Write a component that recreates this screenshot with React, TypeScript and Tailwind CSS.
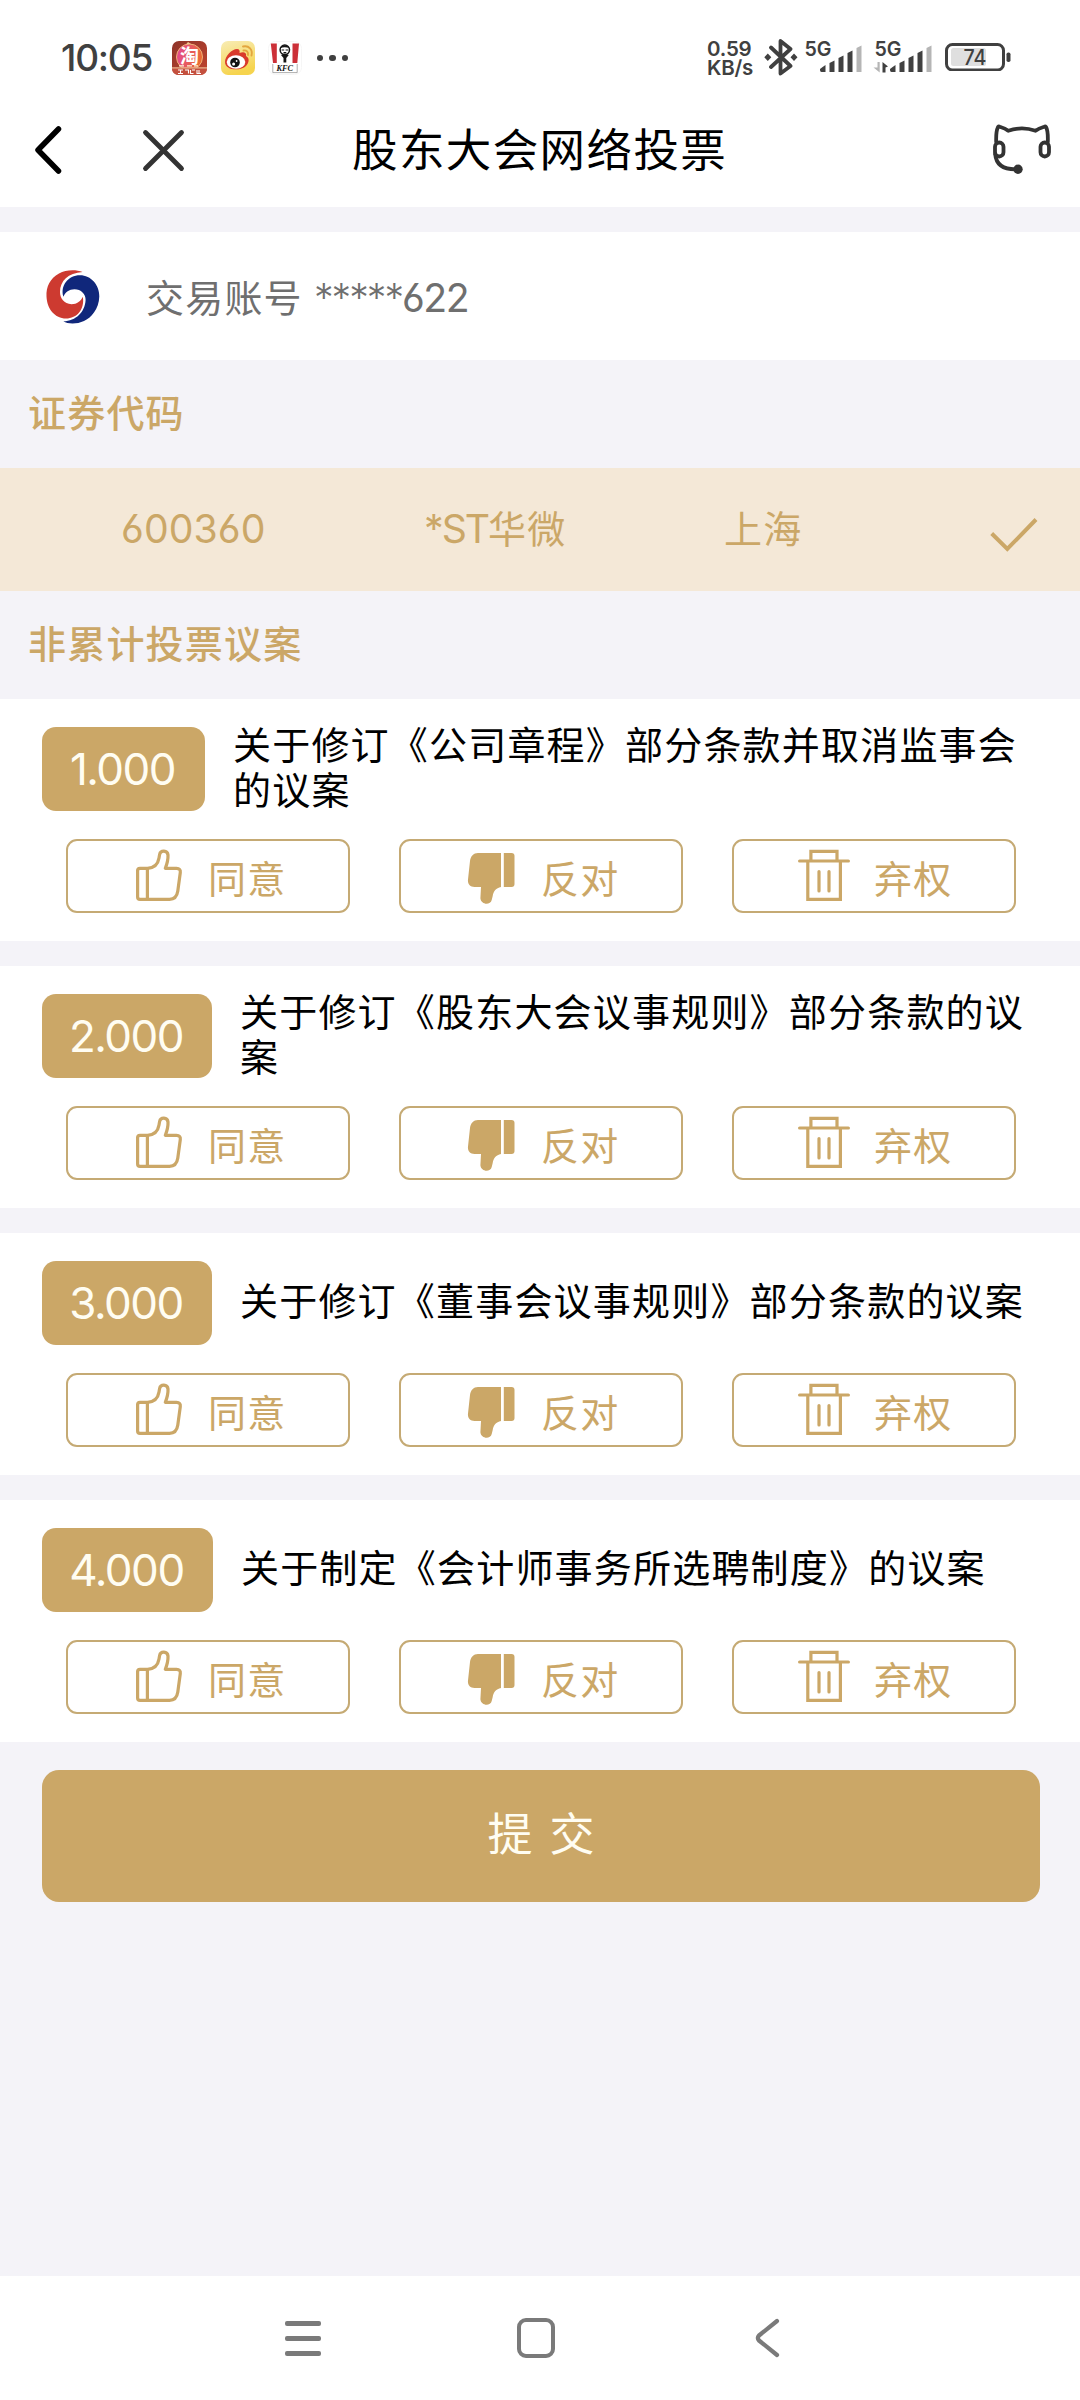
import React from 'react';

const proposals = [
  { no: '1.000', title: '关于修订《公司章程》部分条款并取消监事会的议案', badge: 'w-[163px]' },
  { no: '2.000', title: '关于修订《股东大会议事规则》部分条款的议案', badge: 'w-[170px]' },
  { no: '3.000', title: '关于修订《董事会议事规则》部分条款的议案', badge: 'w-[170px]' },
  { no: '4.000', title: '关于制定《会计师事务所选聘制度》的议案', badge: 'w-[171px]' },
];

function TaobaoIcon() {
  return (
    <svg className="h-[34px] w-[35px]" viewBox="0 0 35 34">
      <defs>
        <linearGradient id="tb" x1="0" y1="0" x2="1" y2="1">
          <stop offset="0" stopColor="#8e3328" />
          <stop offset="1" stopColor="#c0452f" />
        </linearGradient>
        <linearGradient id="tbc" x1="0" y1="0" x2="1" y2="0.3">
          <stop offset="0" stopColor="#e2459a" />
          <stop offset="1" stopColor="#ea6a34" />
        </linearGradient>
      </defs>
      <rect width="35" height="34" rx="7" fill="url(#tb)" />
      <path d="M12 6 L16 1 L22 5 Z" fill="#f0cf9c" />
      <circle cx="17.5" cy="16" r="13" fill="url(#tbc)" stroke="#f0b277" strokeWidth="1" />
      <text x="17.5" y="22" textAnchor="middle" fontSize="19" fontWeight="700" fill="#fff" fontFamily="Noto Sans CJK SC, sans-serif">淘</text>
      <path d="M0 27 H35 Q35 34 28 34 H7 Q0 34 0 27 Z" fill="#c4503e" />
      <path d="M0 26.8 H35" stroke="#eab58c" strokeWidth="1.2" />
      <path d="M7 24.8 h5 M15 24.8 h5 M22 24.8 h4" stroke="#fff3d8" strokeWidth="1.3" />
      <path d="M6 29 h5 M8.5 29 v3.500 M6 32.500 h5 M13 29 h3.500 v3.500 M18.500 29 v3.500 h3 M20 29 h3 M25 29 v3.500 h4 M27 29 v3" stroke="#fff" strokeWidth="1.100" fill="none" />
    </svg>
  );
}

function WeiboIcon() {
  return (
    <svg className="h-[34px] w-[34px]" viewBox="0 0 34 34">
      <defs>
        <linearGradient id="wb" x1="0" y1="0" x2="0.3" y2="1">
          <stop offset="0" stopColor="#f8ecb4" />
          <stop offset="1" stopColor="#f6d44e" />
        </linearGradient>
      </defs>
      <rect width="34" height="34" rx="7" fill="url(#wb)" />
      <path d="M4 21 C4 15 11 8 16 8 C18.500 8 19 10 18.500 12 C22 10.500 26 11 25 15 C29 17 28 22 25 25 C20 30 4 30 4 21 Z" fill="#d93a2b" />
      <ellipse cx="15" cy="21" rx="9.300" ry="6.700" fill="#fff" />
      <circle cx="14" cy="21.500" r="4.800" fill="#111" />
      <circle cx="12.600" cy="23" r="1.500" fill="#fff" />
      <circle cx="15.600" cy="20" r="0.900" fill="#fff" />
      <path d="M22 5.500 C28 4 32 9 30.500 14.500 M22.500 9.500 C25.500 9 27.500 11 27 14" fill="none" stroke="#e3a63f" strokeWidth="1.900" strokeLinecap="round" />
    </svg>
  );
}

function KfcIcon() {
  return (
    <svg className="h-[34px] w-[34px]" viewBox="0 0 34 34">
      <rect x="0.500" y="0.500" width="33" height="33" rx="7" fill="#fff" stroke="#f6f6f6" />
      <path d="M2.800 2.500 H8.800 V22 H5 Z M24.500 2.500 H31 L29.300 22 H24.500 Z" fill="#cc3038" />
      <circle cx="16.800" cy="8.800" r="4.700" fill="#fff" stroke="#161616" strokeWidth="1.500" />
      <path d="M12 7.500 C13.500 3 20 3 21.600 7.500 C18.500 5.800 15 5.800 12 7.500 Z" fill="#161616" />
      <path d="M13.600 9 h2.600 M17.600 9 h2.600 M15.500 11.500 h2.800" stroke="#161616" strokeWidth="1.100" />
      <path d="M13 14 L16.800 12.500 L20.800 14 L18.300 17 V21.500 H15.500 V17 Z" fill="#161616" />
      <text x="16.800" y="30" textAnchor="middle" fontSize="8.800" fontWeight="700" fontStyle="italic" fill="#111" textLength="16.500" lengthAdjust="spacingAndGlyphs" fontFamily="Liberation Serif, serif">KFC</text>
      <path d="M4.800 23 V31.600 H29.200 V23" stroke="#777" strokeWidth="0.600" fill="none" />
    </svg>
  );
}

function BluetoothIcon() {
  return (
    <svg className="h-[38px] w-[34px]" viewBox="0 0 34 38" fill="none" stroke="#404040" strokeWidth="3.800" strokeLinejoin="round" strokeLinecap="round">
      <path d="M7 9.500 L26.500 28 L16.500 35.500 V3 L26.500 11 L7 29" />
      <path d="M0.300 19.300 L3.800 15.600 L7.300 19.300 L3.800 23 Z M26.500 19.300 L30 15.600 L33.500 19.300 L30 23 Z" fill="#404040" stroke="none" />
    </svg>
  );
}

function Signal({ data }: { data?: boolean }) {
  return (
    <svg className="h-[38px] w-[62px] overflow-visible" viewBox="-2 -4 62 38">
      <text x="-0.500" y="16.300" fontSize="20.500" fontWeight="600" fill="#404040" textLength="27" lengthAdjust="spacingAndGlyphs" fontFamily="Inter, sans-serif">5G</text>
      {data && (
        <g>
          <path d="M4.700 22 V32.500 L-1.500 27.500 H2.500 V22 Z" fill="#b5b5b5" />
          <path d="M7.500 32.500 V22 L13 26.500 L10.500 27.500 V32.500 Z" fill="#404040" />
        </g>
      )}
      <g fill="#404040">
        <path d="M15 29 Q17.500 27 20.500 25 V32 H16.500 Q15 32 15 30 Z" />
        <path d="M24.500 23 L29.500 20.500 V32 H24.500 Z" />
        <path d="M33.500 18 L38.500 15.500 V32 H33.500 Z" />
        <path d="M42.500 13 L47.500 10.500 V32 H42.500 Z" />
      </g>
      <path d="M51.500 8 L56.500 5.500 V32 H51.500 Z" fill="#b5b5b5" />
    </svg>
  );
}

function Battery() {
  return (
    <svg className="h-[28px] w-[66px]" viewBox="0 0 66 28">
      <rect x="1.500" y="1.500" width="57" height="25.500" rx="6" fill="none" stroke="#404040" strokeWidth="3" />
      <rect x="6" y="5" width="35" height="18" rx="2.500" fill="#dfdfdf" />
      <rect x="61.500" y="9.500" width="4" height="9.500" rx="1.800" fill="#404040" />
      <text x="30" y="22.300" textAnchor="middle" fontSize="22" fontWeight="500" fill="#404040" textLength="23" lengthAdjust="spacingAndGlyphs" fontFamily="Inter, sans-serif">74</text>
    </svg>
  );
}

function StatusBar() {
  return (
    <div className="flex h-[92px] items-start pt-[41px] text-[#404040]">
      <span className="ml-[61px] mt-[-2px] w-[92px] whitespace-nowrap text-[37px] font-medium leading-[37px] tracking-[-1.2px]">10:05</span>
      <div className="ml-[19px] flex gap-[13.500px]">
        <TaobaoIcon />
        <WeiboIcon />
        <KfcIcon />
      </div>
      <div className="ml-[15px] mt-[14px] flex gap-[6px]">
        <i className="size-[6.400px] rounded-full bg-[#404040]" />
        <i className="size-[6.400px] rounded-full bg-[#404040]" />
        <i className="size-[6.400px] rounded-full bg-[#404040]" />
      </div>
      <div className="ml-auto flex">
        <div className="mt-[-2px] w-[57px] whitespace-nowrap text-[20.500px] font-semibold leading-[19px] tracking-[-0.2px]">
          0.59<br />KB/s
        </div>
        <div className="mt-[-3px]"><BluetoothIcon /></div>
        <div className="ml-[5px] mt-[-5px]"><Signal /></div>
        <div className="ml-[8px] mt-[-5px]"><Signal data /></div>
        <div className="ml-[10px] mr-[69px] mt-[2px]"><Battery /></div>
      </div>
    </div>
  );
}

function HeaderBar() {
  return (
    <div className="flex h-[115px] items-start">
      <svg className="ml-[32px] mt-[32px] h-[52px] w-[32px]" viewBox="0 0 32 52" fill="none" stroke="#000" strokeWidth="5.500" strokeLinecap="round" strokeLinejoin="round">
        <path d="M26.500 5 L6 26 L26.500 47" />
      </svg>
      <svg className="ml-[76px] mt-[35px] h-[46px] w-[46px]" viewBox="0 0 46 46" fill="none" stroke="#333" strokeWidth="4.800" strokeLinecap="round">
        <path d="M5.500 5.500 L41.500 41.500 M41.500 5.500 L5.500 41.500" />
      </svg>
      <h1 className="ml-[166px] mt-[29px] w-[390px] whitespace-nowrap text-[45.500px] leading-[60px] tracking-[1.400px] text-black">股东大会网络投票</h1>
      <svg className="ml-auto mr-[26px] mt-[30px] h-[54px] w-[64px]" viewBox="0 0 64 54" fill="none" stroke="#333" strokeWidth="3.800" strokeLinecap="round" strokeLinejoin="round">
        <path d="M6.200 20 C6 14 6.500 8 8 5 Q8.700 4.200 9.800 4.700 C13 5.700 16 6.800 18.300 8.800 C27 5.700 37 5.700 45.500 8.800 C48 6.800 51 5.700 54.200 4.700 Q55.300 4.200 56 5 C57.800 8 58 14 57.800 20" />
        <rect x="5" y="20.500" width="8.500" height="14" rx="4.200" />
        <rect x="50.500" y="20.500" width="8.500" height="14" rx="4.200" />
        <path d="M5.200 32 C6 42 12 47.500 26 47.300" />
        <circle cx="28" cy="47.300" r="4.700" fill="#333" stroke="none" />
      </svg>
    </div>
  );
}

function BrokerLogo() {
  return (
    <svg className="mt-[2px] h-[56px] w-[54px]" viewBox="0 0 54 56">
      <path d="M36.600 3 C30 0.500 20 0.500 13 4.500 C4 9.500 0 18 0.500 27.500 C1 40 9 49.500 20 49.500 C31 49.500 39 40 36.800 27.700 C35 32 31 35.200 25.500 35.200 C18 35 14 29 14 23 C14 12 22 4 36.600 3 Z" fill="#cd3a30" />
      <path d="M17.400 27.700 C14 17 22 6.300 34 6.300 C45 6.300 53.500 16 53.300 27.500 C53 40 45 49 38 52 C31 55.300 22 55.300 17.400 52.300 C30 52 39 43 39.600 31 C39.800 25 35 20.200 28.500 20.200 C23 20.200 19.500 23 17.400 27.700 Z" fill="#10277b" />
    </svg>
  );
}

function ThumbUp() {
  return (
    <svg className="h-[56px] w-[52px]" viewBox="0 -2 52 56" fill="none" stroke="#cba767" strokeWidth="3.200" strokeLinejoin="round">
      <path d="M8 18.300 H15.500 C22 18 26 14 27 8 L27.600 4.500 C28.500 0 35.500 0 36 5 C36.200 9 35 14 33.300 18.300 H44.500 C47.500 18.300 48.600 20 48.300 22.500 L45.800 41 C45 46.500 42.500 49.300 37.500 49.300 H8 Q5.600 49.300 5.600 47 V20.500 Q5.600 18.300 8 18.300 Z M15.400 18.300 V49.300" />
    </svg>
  );
}

function ThumbDown() {
  return (
    <svg className="h-[56px] w-[52px]" viewBox="0 -2 52 56" fill="#cba767">
      <path d="M13 3 H36 V37 C31 38 28.500 41 27.700 46 L26.700 50 C25.500 55.500 16 55 15.400 48.300 L16 37 H9.500 C5 37 2.500 34 3 29.500 L5 11 C5.700 6 8.500 3 13 3 Z" />
      <path d="M38.800 3 H46.500 Q49.500 3 49.500 6 V34 Q49.500 37 46.500 37 H38.800 Z" />
    </svg>
  );
}

function Trash() {
  return (
    <svg className="h-[56px] w-[52px]" viewBox="0 -2 52 56" fill="none" stroke="#cba767" strokeWidth="3.200">
      <path d="M12.900 11 V1.300 H39 V11 M9.800 11 V49.300 H42.400 V11" />
      <path d="M1.600 11 H50.400 M21 21.500 V41 M31 21.500 V41" strokeLinecap="round" />
    </svg>
  );
}

function VoteButton({ icon, label }: { icon: React.ReactNode; label: string }) {
  return (
    <button className="flex h-[74px] w-[284px] items-center rounded-[11px] border-2 border-[#c5aa74] pl-[64px] text-[38px] leading-[46px] tracking-[1.200px] text-[#cba767]">
      {icon}
      <span className="ml-[24px] mt-[6px]">{label}</span>
    </button>
  );
}

function Proposal({ no, title, badge }: { no: string; title: string; badge: string }) {
  return (
    <section className="h-[242px] bg-white pt-[28px]">
      <div className="flex h-[84px] items-center pl-[42px]">
        <div className={`flex h-[84px] shrink-0 items-center justify-center rounded-[14px] bg-[#cba767] pr-[2px] text-[44px] tracking-[-1.500px] text-[#fffdf2] ${badge}`}>{no}</div>
        <p className="ml-[28px] mt-[-3px] w-[792px] text-[38px] leading-[45px] tracking-[1.200px] text-black">{title}</p>
      </div>
      <div className="mt-[28px] flex gap-[49px] pl-[66px]">
        <VoteButton icon={<ThumbUp />} label="同意" />
        <VoteButton icon={<ThumbDown />} label="反对" />
        <VoteButton icon={<Trash />} label="弃权" />
      </div>
    </section>
  );
}

export default function App() {
  return (
    <main className="flex h-[2400px] w-[1080px] flex-col overflow-hidden bg-[#f4f3f8] font-[Inter,'Noto_Sans_CJK_SC',sans-serif] [font-feature-settings:'cv03']">
      <header className="bg-white">
        <StatusBar />
        <HeaderBar />
      </header>

      <div className="mt-[25px] flex h-[128px] items-center bg-white pl-[46px] text-[39.200px] text-[#6f6f6f]">
        <BrokerLogo />
        <span className="ml-[46px] mt-[4px] w-[168px] text-[38px] tracking-[1.200px]">交易账号</span>
        <span className="mt-[4px] w-[88px] tracking-[-2px] font-light">*****</span>
        <span className="mt-[5px] tracking-[-1.500px]">622</span>
      </div>

      <h2 className="flex h-[108px] items-center pb-[2px] pl-[28px] text-[38px] font-medium tracking-[1.200px] text-[#cba767]">证券代码</h2>

      <div className="flex h-[123px] items-center bg-[#f4e8d7] text-[39.200px] text-[#cba767]">
        <span className="ml-[121px] w-[303px] tracking-[0.100px]">600360</span>
        <span className="flex w-[300px] items-center whitespace-nowrap">
          <span className="tracking-[-2px]">*ST</span>
          <span className="text-[38px] tracking-[1.200px]">华微</span>
        </span>
        <span className="w-[264px] text-[38px] tracking-[1.200px]">上海</span>
        <svg className="mt-[11px] h-[38px] w-[52px]" viewBox="0 0 52 38" fill="none" stroke="#cba767" strokeWidth="4">
          <path d="M3.700 17.500 L19.300 33 L48 3.500" />
        </svg>
      </div>

      <h2 className="flex h-[108px] items-center pb-[2px] pl-[28px] text-[38px] font-medium tracking-[1.200px] text-[#cba767]">非累计投票议案</h2>

      <div className="flex flex-col gap-[25px]">
        {proposals.map((p) => (
          <Proposal key={p.no} {...p} />
        ))}
      </div>

      <button className="ml-[42px] mt-[28px] flex h-[132px] w-[998px] items-center justify-center gap-[17px] rounded-[17px] bg-[#cba767] pb-[2px] text-[45px] text-[#fffdf2]">
        <span>提</span>
        <span>交</span>
      </button>

      <nav className="mt-auto flex h-[124px] items-start bg-white">
        <div className="ml-[285px] mt-[45px] flex w-[36px] flex-col gap-[10px]">
          <i className="h-[5px] rounded-[2px] bg-[#7a7a7a]" />
          <i className="h-[5px] rounded-[2px] bg-[#7a7a7a]" />
          <i className="h-[5px] rounded-[2px] bg-[#7a7a7a]" />
        </div>
        <div className="ml-[196px] mt-[42px] h-[40px] w-[38px] rounded-[9px] border-[4px] border-[#7a7a7a]" />
        <svg className="ml-[198px] mt-[41px] h-[42px] w-[28px]" viewBox="0 0 28 42" fill="none" stroke="#7a7a7a" strokeWidth="4.200" strokeLinecap="round" strokeLinejoin="round">
          <path d="M24 4 L6 18.500 Q3.800 21 6 23.500 L24 38" />
        </svg>
      </nav>
    </main>
  );
}
